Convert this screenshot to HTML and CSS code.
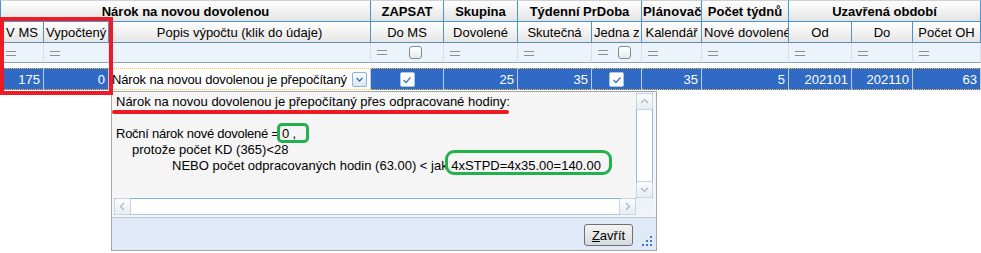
FILE: index.html
```html
<!DOCTYPE html>
<html lang="cs">
<head>
  <meta charset="UTF-8">
  <title>Nárok na novou dovolenou</title>
  <link rel="stylesheet" href="styles.css">
</head>
<body>
  <div class="screen">
    <table class="tbl">
      <colgroup>
        <col style="width:44px"><col style="width:65px"><col style="width:262px">
        <col style="width:73px"><col style="width:74px"><col style="width:74px">
        <col style="width:50px"><col style="width:60px"><col style="width:87px">
        <col style="width:63px"><col style="width:61px"><col style="width:68px">
      </colgroup>
      <thead>
        <tr class="grp">
          <th colspan="3">Nárok na novou dovolenou</th>
          <th>ZAPSAT</th>
          <th>Skupina</th>
          <th colspan="2">Týdenní PrDoba</th>
          <th class="tight">Plánovač</th>
          <th>Počet týdnů</th>
          <th colspan="3">Uzavřená období</th>
        </tr>
        <tr class="sub">
          <th>V MS</th>
          <th>Vypočtený</th>
          <th>Popis výpočtu (klik do údaje)</th>
          <th>Do MS</th>
          <th>Dovolené</th>
          <th>Skutečná</th>
          <th>Jedna z</th>
          <th>Kalendář</th>
          <th>Nové dovolené</th>
          <th>Od</th>
          <th>Do</th>
          <th>Počet OH</th>
        </tr>
        <tr class="filter">
          <td><span class="eq"></span></td>
          <td><span class="eq"></span></td>
          <td></td>
          <td><div class="fcell"><span class="eq"></span><span class="fbox"><span class="box"></span></span></div></td>
          <td><span class="eq"></span></td>
          <td><span class="eq"></span></td>
          <td><div class="fcell"><span class="eq"></span><span class="fbox"><span class="box"></span></span></div></td>
          <td><span class="eq"></span></td>
          <td><span class="eq"></span></td>
          <td><span class="eq"></span></td>
          <td><span class="eq"></span></td>
          <td><span class="eq"></span></td>
        </tr>
      </thead>
      <tbody>
        <tr class="gap"><td colspan="12"></td></tr>
        <tr class="sel">
          <td>175</td>
          <td>0</td>
          <td class="desc">
            <div class="desc-in">
              <span class="desc-text">Nárok na novou dovolenou je přepočítaný</span>
              <span class="drop">
                <svg width="13" height="13" viewBox="0 0 13 13"><path d="M3.5 5 L6.5 8 L9.5 5" fill="none" stroke="#3f72b5" stroke-width="1.4"/></svg>
              </span>
            </div>
          </td>
          <td class="mid"><span class="chk"><svg width="12" height="12" viewBox="0 0 12 12"><path d="M2.5 6 L5 8.5 L9.5 3.5" fill="none" stroke="#3b78bd" stroke-width="1.3"/></svg></span></td>
          <td>25</td>
          <td>35</td>
          <td class="mid"><span class="chk"><svg width="12" height="12" viewBox="0 0 12 12"><path d="M2.5 6 L5 8.5 L9.5 3.5" fill="none" stroke="#3b78bd" stroke-width="1.3"/></svg></span></td>
          <td>35</td>
          <td>5</td>
          <td>202101</td>
          <td>202110</td>
          <td>63</td>
        </tr>
      </tbody>
    </table>

    <div class="popup">
      <div class="popup-body">
        <div class="popup-text">
          <div>Nárok na novou dovolenou je přepočítaný přes odpracované hodiny:</div>
          <div>&nbsp;</div>
          <div class="narrow">Roční nárok nové dovolené = 0 ,</div>
          <div class="ind1">protože počet KD (365)&lt;28</div>
          <div class="ind2">NEBO počet odpracovaných hodin (63.00) &lt; jak 4xSTPD=4x35.00=140.00</div>
        </div>
        <div class="vscroll">
          <span class="arrow"><svg width="15" height="15" viewBox="0 0 15 15"><path d="M4 9 L7.5 5.5 L11 9" fill="none" stroke="#a9b7c6" stroke-width="1.2"/></svg></span>
          <span class="arrow"><svg width="15" height="15" viewBox="0 0 15 15"><path d="M4 6 L7.5 9.5 L11 6" fill="none" stroke="#a9b7c6" stroke-width="1.2"/></svg></span>
        </div>
        <div class="hscroll">
          <span class="arrow"><svg width="15" height="15" viewBox="0 0 15 15"><path d="M9 4 L5.5 7.5 L9 11" fill="none" stroke="#a9b7c6" stroke-width="1.2"/></svg></span>
          <span class="arrow"><svg width="15" height="15" viewBox="0 0 15 15"><path d="M6 4 L9.5 7.5 L6 11" fill="none" stroke="#a9b7c6" stroke-width="1.2"/></svg></span>
        </div>
        <div class="corner"></div>
      </div>
      <div class="popup-foot">
        <button class="close-btn"><u>Z</u>avřít</button>
        <svg class="grip" width="11" height="11" viewBox="0 0 11 11">
          <rect x="8" y="0" width="2" height="2" fill="#3a78c8"/>
          <rect x="4" y="4" width="2" height="2" fill="#3a78c8"/>
          <rect x="8" y="4" width="2" height="2" fill="#3a78c8"/>
          <rect x="0" y="8" width="2" height="2" fill="#3a78c8"/>
          <rect x="4" y="8" width="2" height="2" fill="#3a78c8"/>
          <rect x="8" y="8" width="2" height="2" fill="#3a78c8"/>
        </svg>
      </div>
    </div>

    <!-- annotations drawn over the screenshot -->
    <div class="mark-box"></div>
    <div class="mark-line"></div>
    <div class="mark-zero"></div>
    <div class="mark-calc"></div>
  </div>
</body>
</html>
```

FILE: styles.css
```css
body {
  margin: 0;
  background-color: #fff;
  font-family: "Liberation Sans", Arial, sans-serif;
  font-size: 13px;
  color: #000;
}

.screen {
  position: relative;
  width: 981px;
  height: 253px;
  overflow: hidden;
}

.tbl {
  border-collapse: separate;
  border-spacing: 0;
  table-layout: fixed;
  width: 981px;
}

.tbl th,
.tbl td {
  padding: 0 2px;
  white-space: nowrap;
  overflow: hidden;
  box-sizing: border-box;
}

.grp th {
  height: 22px;
  font-weight: bold;
  background: linear-gradient(#ffffff, #e3e3e3);
  border-top: 1px solid #cfd3d6;
  border-right: 1px solid #4a94cb;
  border-bottom: 1px solid #4a94cb;
  text-align: center;
}

.grp th.tight {
  padding: 0 0 0 1px;
  text-align: left;
  letter-spacing: 0.2px;
}

.sub th {
  height: 21px;
  font-weight: normal;
  background: linear-gradient(#ffffff, #e5e5e5);
  border-right: 1px solid #4a94cb;
  border-bottom: 1px solid #5e8fb6;
  text-align: center;
}

.grp th:first-child,
.sub th:first-child {
  border-left: 1px solid #4a94cb;
}

.filter td {
  height: 20px;
  background-color: #edf3fa;
  border-right: 1px solid #d8dfe7;
  border-bottom: 1px solid #8ea4b8;
  padding: 0 0 0 6px;
}

.eq {
  display: inline-block;
  width: 10px;
  height: 3px;
  border-top: 1px solid #8e8e8e;
  border-bottom: 1px solid #8e8e8e;
  vertical-align: middle;
}

.fcell {
  display: flex;
  align-items: center;
}

.fbox {
  flex: 1;
  display: flex;
  justify-content: center;
}

.box {
  width: 13px;
  height: 13px;
  box-sizing: border-box;
  border: 1px solid #7d8b98;
  border-radius: 3px;
  background: linear-gradient(#ffffff, #e4e9ee);
}

.gap td {
  height: 5px;
  padding: 0;
  background-color: #fff;
}

.sel td {
  height: 22px;
  background-color: #316ac5;
  color: #fff;
  text-align: right;
  padding: 0 3px;
  border-top: 1px dotted #f0c04a;
  border-bottom: 1px dotted #f0c04a;
  border-right: 1px solid #b7cdee;
}

.sel td.desc {
  background-color: #fff;
  color: #000;
  text-align: left;
  padding: 0 3px;
}

.desc-in {
  display: flex;
  align-items: center;
  justify-content: space-between;
}

.desc-text {
  letter-spacing: -0.15px;
}

.drop {
  display: flex;
  width: 15px;
  height: 15px;
  box-sizing: border-box;
  align-items: center;
  justify-content: center;
  border: 1px solid #8ab2da;
  border-radius: 2px;
  background: linear-gradient(#ffffff, #dbe7f4);
}

.sel td.mid {
  text-align: center;
}

.chk {
  display: inline-flex;
  width: 15px;
  height: 15px;
  box-sizing: border-box;
  align-items: center;
  justify-content: center;
  vertical-align: middle;
  border: 1px solid #a9c6e4;
  border-radius: 2px;
  background-color: #fff;
}

/* popup with calculation detail */
.popup {
  position: absolute;
  left: 111px;
  top: 91px;
  width: 546px;
  height: 160px;
  box-sizing: border-box;
  border: 1px solid #a6a6a6;
  background-color: #f5f5f5;
  display: flex;
  flex-direction: column;
}

.popup-body {
  display: grid;
  grid-template-columns: 1fr 17px;
  grid-template-rows: 105px 17px;
  padding: 1px 3px 2px 2px;
}

.popup-text {
  padding: 1px 2px;
  line-height: 16px;
  white-space: nowrap;
  overflow: hidden;
}

.narrow {
  letter-spacing: -0.25px;
}

.ind1 {
  padding-left: 16px;
}

.ind2 {
  padding-left: 56px;
}

.vscroll {
  display: flex;
  flex-direction: column;
  justify-content: space-between;
  background-color: #fff;
  border-left: 1px solid #8fbbe6;
  border-right: 1px solid #8fbbe6;
  box-sizing: border-box;
}

.hscroll {
  display: flex;
  justify-content: space-between;
  background-color: #fff;
  border-top: 1px solid #7fb3e6;
  border-bottom: 1px solid #a9cbeb;
  box-sizing: border-box;
}

.arrow {
  display: flex;
  width: 15px;
  height: 15px;
  border: 1px solid #c9d6e3;
  border-radius: 2px;
  background: linear-gradient(#fbfcfd, #e7edf3);
}

.vscroll .arrow {
  margin-left: -1px;
}

.hscroll .arrow {
  margin-top: -1px;
}

.corner {
  background-color: #eef3f9;
}

.popup-foot {
  position: relative;
  flex: 1;
  display: flex;
  align-items: center;
  justify-content: flex-end;
  padding: 2px 23px 0 0;
  background-color: #dfe9f8;
  border-top: 1px solid #c3ccd6;
}

.close-btn {
  width: 49px;
  height: 22px;
  padding: 0;
  font-family: "Liberation Sans", Arial, sans-serif;
  font-size: 13px;
  color: #000;
  border: 1px solid #707070;
  border-radius: 3px;
  background: linear-gradient(#f4f4f4 0%, #e8e8e8 50%, #d5dae0 100%);
}

.grip {
  position: absolute;
  right: 3px;
  bottom: 3px;
}

/* red and green highlight marks */
.mark-box {
  position: absolute;
  left: 0;
  top: 17px;
  width: 113px;
  height: 78px;
  box-sizing: border-box;
  border: 4px solid #ed1c24;
}

.mark-line {
  position: absolute;
  left: 112px;
  top: 110px;
  width: 397px;
  height: 4px;
  border-radius: 2px;
  background-color: #ed1c24;
}

.mark-zero {
  position: absolute;
  left: 277px;
  top: 123px;
  width: 32px;
  height: 20px;
  box-sizing: border-box;
  border: 3px solid #22b14c;
  border-radius: 5px;
}

.mark-calc {
  position: absolute;
  left: 445px;
  top: 150px;
  width: 167px;
  height: 25px;
  box-sizing: border-box;
  border: 3px solid #22b14c;
  border-radius: 9px;
}
```
